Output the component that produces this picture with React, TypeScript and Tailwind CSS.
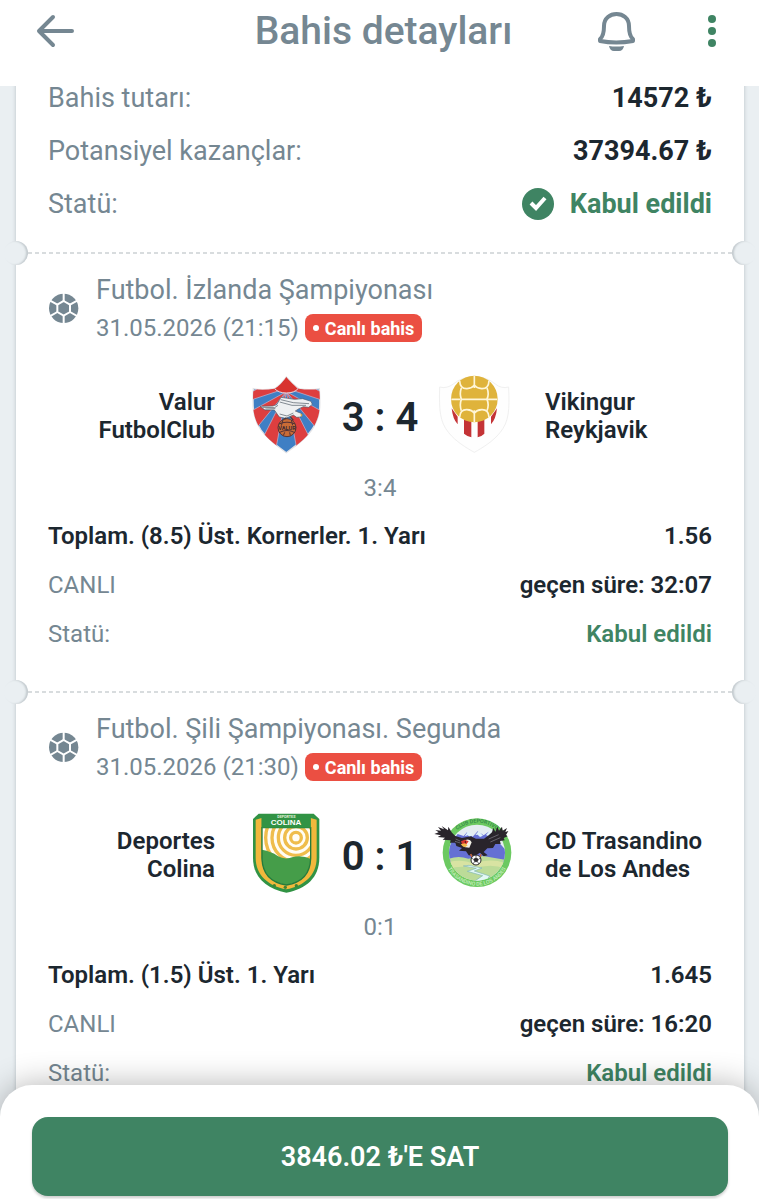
import React from "react";

function BallIcon() {
  return (
    <svg viewBox="0 0 96 96" className="size-8 shrink-0" aria-hidden="true">
      <circle cx="47" cy="46" r="44" fill="#758792" />
      <g stroke="#fff" strokeWidth="6" fill="none">
        <path d="M47 24 66 35V57L47 68 28 57V35Z" />
        <path d="M47 0V24M47 68V96M66 35 89 22M66 57 89 70M28 35 5 22M28 57 5 70" />
      </g>
    </svg>
  );
}

function ValurCrest() {
  const shield = "M139 36C154 54 166 64 176 71 196 74 218 75 238 71 241 122 243 155 215 195 196 223 168 242 139 263 111 242 82 223 63 195 36 155 38 122 40 71 60 76 83 74 104 71 116 64 126 54 139 36Z";
  return (
    <svg viewBox="18 33 240 240" className="size-20 overflow-visible" role="img" aria-label="Valur FutbolClub">
      <defs>
        <clipPath id="valur"><path d={shield} /></clipPath>
      </defs>
      <path d={shield} fill="#3f7fc4" stroke="#e3e3e6" strokeWidth="4" />
      <g clipPath="url(#valur)">
        <g fill="#dd3e3f" stroke="#c9b9d2" strokeWidth="2">
          <path d="M139 70 62 66 30 84V106Z" />
          <path d="M139 80 34 138 54 184Z" />
          <path d="M139 80 72 212 108 250Z" />
          <path d="M139 70 216 66 248 84V106Z" />
          <path d="M139 80 244 138 224 184Z" />
          <path d="M139 80 206 212 170 250Z" />
        </g>
        <path d="M139 32 174 71Q163 84 139 84 116 84 104 71Z" fill="#d8332f" stroke="#e8dce6" strokeWidth="3" />
      </g>
      <path d="M60 124 98 123 110 119 123 97 164 103 188 101 213 109 217 118 206 127 190 125 177 131 166 138 186 146 183 156 170 157 160 150 137 160 118 156 103 135 75 135Z" fill="#eef0f2" stroke="#4b5a6b" strokeWidth="2" />
      <g stroke="#4b5660" strokeWidth="2" fill="none">
        <path d="M67 127 104 128 114 121M76 132 106 131M119 147 141 153 160 144M122 104 160 113 207 116M119 111 156 121 198 121" />
        <path d="M139 158 128 166M151 155 160 166M136 161 143 172" stroke="#443a39" strokeWidth="4" />
      </g>
      <path d="M181 146 188 149 184 156Z" fill="#e1a438" />
      <circle cx="141" cy="188" r="27" fill="#c96c36" stroke="#573535" strokeWidth="3" />
      <path d="M117 177Q141 166 165 177M117 203Q141 190 165 203M129 165 124 182M154 165 158 181M130 212 134 202M151 212 149 202" fill="none" stroke="#513036" strokeWidth="3" />
      <text x="141" y="195" textAnchor="middle" className="font-['Roboto'] text-[17px] font-bold" fill="#3b2934">VALUR</text>
    </svg>
  );
}

function VikingurCrest() {
  return (
    <svg viewBox="12 33 240 240" className="size-20 overflow-visible" role="img" aria-label="Vikingur Reykjavik">
      <path d="M29 66Q50 72 70 57 95 35 133 36 171 35 196 57 214 72 236 66C239 135 237 170 210 203 188 230 158 248 133 262 108 248 78 230 56 203 29 170 27 135 29 66Z" fill="#fefefe" stroke="#f0f0f0" strokeWidth="3" />
      <g fill="#c43336">
        <path d="M65 130 83 155V178Q68 162 65 130ZM102 163 124 169V217Q113 215 102 206ZM143 169 163 163V206Q154 215 143 217ZM183 155 201 130Q198 162 183 178Z" />
      </g>
      <circle cx="133" cy="102" r="70" fill="#dfb33b" />
      <g fill="none" stroke="#fff6d8" strokeWidth="5">
        <path d="M133 32V69M133 136V172M94 103H171M64 103 91 103M171 103H202" />
        <path d="M89 47Q90 72 111 71 126 70 133 61 140 70 155 71 176 72 177 47M89 157Q90 133 111 134 126 135 133 144 140 135 155 134 176 133 177 157" />
        <path d="M94 69Q88 86 94 103 88 119 94 137M171 69Q178 86 171 103 178 119 171 137" />
      </g>
    </svg>
  );
}

function ColinaCrest() {
  return (
    <svg viewBox="3 30 240 240" className="size-20 overflow-visible" role="img" aria-label="Deportes Colina">
      <defs>
        <clipPath id="colina"><path d="M51 68H197V160Q195 230 124 240 53 230 51 160Z" /></clipPath>
      </defs>
      <path d="M41 26H206L223 42V158C223 218 183 252 124 263 65 252 24 218 24 158V42Z" fill="#319344" />
      <path d="M32 44 50 39V158C50 202 78 230 124 238 170 230 197 202 197 158V39L215 44V158C215 211 177 243 124 253 71 243 32 211 32 158Z" fill="#f1b83c" />
      <g clipPath="url(#colina)">
        <path d="M48 66H200V245H48Z" fill="#fffdf5" />
        <g fill="none" stroke="#efbd4c" strokeWidth="10">
          <circle cx="153" cy="98" r="16" />
          <circle cx="153" cy="98" r="34" />
          <circle cx="153" cy="98" r="53" />
          <circle cx="153" cy="98" r="72" />
          <circle cx="153" cy="98" r="91" />
        </g>
        <path d="M48 134Q78 139 98 153 120 166 144 156 173 150 200 163V245H48Z" fill="#459d49" />
      </g>
      <path d="M51 68H197V160Q195 230 124 240 53 230 51 160Z" fill="none" stroke="#257b3c" strokeWidth="4" />
      <path d="M50 38H197V68H50Z" fill="#319344" />
      <g fill="#418334">
        <circle cx="88" cy="242" r="5" />
        <circle cx="121" cy="247" r="5" />
        <circle cx="154" cy="242" r="5" />
      </g>
      <text x="124" y="39" textAnchor="middle" className="font-['Roboto'] text-[11px] font-bold" fill="#e3f2dc">DEPORTES</text>
      <text x="123" y="60" textAnchor="middle" className="font-['Liberation_Sans'] text-[24px] font-bold" fill="#fff">COLINA</text>
    </svg>
  );
}

function TrasandinoCrest() {
  return (
    <svg viewBox="27 30 240 240" className="size-20 overflow-visible" role="img" aria-label="CD Trasandino de Los Andes">
      <defs>
        <clipPath id="andes"><circle cx="156" cy="143" r="84" /></clipPath>
        <path id="andes-top" d="M66 143A90 90 0 0 1 246 143" />
        <path id="andes-bottom" d="M57 143A99 99 0 0 0 255 143" />
      </defs>
      <circle cx="156" cy="143" r="103" fill="#6cc961" />
      <circle cx="156" cy="143" r="84" fill="#e4edf2" />
      <g clipPath="url(#andes)">
        <path d="M68 145 78 113 98 87 116 93 126 82 143 95 158 79 176 91 191 80 209 98 240 133V172H68Z" fill="#6570d4" />
        <path d="M119 94 129 79 142 91 135 96 128 91ZM151 90 161 78 174 92 165 96 158 89ZM183 90 193 78 206 96 194 95Z" fill="#dff2f9" />
        <path d="M68 163Q98 150 130 161L174 153 240 164V234H68Z" fill="#bcdb98" />
        <path d="M68 172Q111 160 145 177 194 158 240 174V190Q199 174 145 190 104 179 68 193Z" fill="#d8e3a2" />
        <path d="M115 183 154 190 127 199 173 212 148 229H183L194 213 148 198 171 189 132 181Z" fill="#e3f8f5" stroke="#7fb6b3" strokeWidth="2" />
      </g>
      <text className="font-['Roboto'] text-[16px] font-medium" fill="#2f8547">
        <textPath href="#andes-top" startOffset="50%" textAnchor="middle">CLUB DEPORTIVO</textPath>
      </text>
      <text className="font-['Roboto'] text-[16px] font-medium" fill="#c5efbe">
        <textPath href="#andes-bottom" startOffset="50%" textAnchor="middle">TRASANDINO DE LOS ANDES</textPath>
      </text>
      <path d="M28 87 41 82 31 75 48 77 39 66 57 73 50 63 69 76 70 65 81 83 91 93 111 99 137 94 153 101 177 101 191 91 201 82 205 68 211 80 217 65 222 77 231 65 233 77 246 69 241 81 250 78 243 90 248 94 236 99 239 106 225 108 227 117 211 117 204 129 187 130 176 141 188 151 176 154 165 143 149 153 131 151 123 139 102 137 111 129 94 123 91 113 75 113 77 106 53 104 60 98 38 96 48 91Z" fill="#29242b" />
      <path d="M92 102 105 108M90 109 106 114M191 102 221 89M196 111 226 98" stroke="#85818c" strokeWidth="2" />
      <path d="M121 105Q135 100 140 112L133 128 121 127 112 122 121 117Z" fill="#f3f0e6" />
      <path d="M108 109 119 104 131 109 123 119 111 117Z" fill="#d9372f" />
      <path d="M107 118 119 115 128 121 120 127 113 124Z" fill="#f0b947" />
      <circle cx="121" cy="111" r="2" fill="#111" />
      <path d="M137 147 142 158M168 148 164 160" stroke="#c0653d" strokeWidth="5" />
      <circle cx="153" cy="165" r="15" fill="#fff" stroke="#29282c" strokeWidth="3" />
      <path d="M153 158 160 163 157 170H149L146 163ZM153 156V150M161 162 168 159M158 171 162 177M148 171 144 177M145 162 138 159" fill="#29282c" stroke="#29282c" strokeWidth="2" />
    </svg>
  );
}

function Perforation() {
  return (
    <div className="relative h-[2px]">
      <div className="mx-3 h-[2px] bg-[repeating-linear-gradient(90deg,#d8dcde_0_4px,transparent_4px_7px)]" />
      <span className="absolute -top-[11px] -left-3 size-6 rounded-full bg-[#eaeff2] shadow-[inset_-2px_0_2px_#c4cbcf]" />
      <span className="absolute -top-[11px] -right-3 size-6 rounded-full bg-[#eaeff2] shadow-[inset_2px_0_2px_#c4cbcf]" />
    </div>
  );
}

type Bet = {
  league: string;
  date: string;
  home: [string, string];
  away: [string, string];
  homeCrest: React.ReactNode;
  awayCrest: React.ReactNode;
  score: [number, number];
  market: string;
  odds: string;
  elapsed: string;
};

const bets: Bet[] = [
  {
    league: "Futbol. İzlanda Şampiyonası",
    date: "31.05.2026 (21:15)",
    home: ["Valur", "FutbolClub"],
    away: ["Vikingur", "Reykjavik"],
    homeCrest: <ValurCrest />,
    awayCrest: <VikingurCrest />,
    score: [3, 4],
    market: "Toplam. (8.5) Üst. Kornerler. 1. Yarı",
    odds: "1.56",
    elapsed: "32:07",
  },
  {
    league: "Futbol. Şili Şampiyonası. Segunda",
    date: "31.05.2026 (21:30)",
    home: ["Deportes", "Colina"],
    away: ["CD Trasandino", "de Los Andes"],
    homeCrest: <ColinaCrest />,
    awayCrest: <TrasandinoCrest />,
    score: [0, 1],
    market: "Toplam. (1.5) Üst. 1. Yarı",
    odds: "1.645",
    elapsed: "16:20",
  },
];

function BetSection({ bet }: { bet: Bet }) {
  return (
    <section>
      <Perforation />
      <div className="px-8 pt-[17px] pb-8">
        <div className="flex items-center gap-4 text-[#758792]">
          <BallIcon />
          <div>
            <h2 className="text-[27px] leading-[38px]">{bet.league}</h2>
            <div className="flex items-center gap-[6px]">
              <time className="text-[24px] leading-[38px]">{bet.date}</time>
              <span className="flex h-7 items-center gap-[6px] rounded-lg bg-[#eb4f42] px-2 text-[18px] font-bold text-white">
                <i className="size-[6px] rounded-full bg-white" />
                Canlı bahis
              </span>
            </div>
          </div>
        </div>
        <div className="mt-[29px] grid grid-cols-[1fr_80px_108px_80px_1fr] items-center text-[24px] leading-7 font-semibold text-[#1c272f]">
          <p className="pr-[31px] text-right">{bet.home[0]}<br />{bet.home[1]}</p>
          {bet.homeCrest}
          <p className="pt-1 text-center text-[40px] leading-[48px]">{bet.score[0]} : {bet.score[1]}</p>
          {bet.awayCrest}
          <p className="pl-[31px]">{bet.away[0]}<br />{bet.away[1]}</p>
        </div>
        <p className="mt-4 mb-2 text-center text-[24px] leading-8 text-[#758792]">{bet.score[0]}:{bet.score[1]}</p>
        <div className="text-[24px] leading-[49px] text-[#758792]">
          <div className="flex justify-between font-semibold text-[#1c272f]"><span>{bet.market}</span><span>{bet.odds}</span></div>
          <div className="flex justify-between"><span>CANLI</span><span className="font-semibold text-[#1c272f]">geçen süre: {bet.elapsed}</span></div>
          <div className="flex justify-between"><span>Statü:</span><span className="font-semibold text-[#3f8463]">Kabul edildi</span></div>
        </div>
      </div>
    </section>
  );
}

export default function App() {
  return (
    <div className="flex h-screen flex-col bg-[#eaeff2] font-['Roboto',sans-serif]">
      <header className="relative z-10 flex h-[86px] shrink-0 items-start justify-between bg-white pt-2 pr-[31px] pl-8">
        <button aria-label="Geri" className="flex h-12 w-12 items-center justify-center text-[#758792]">
          <svg viewBox="0 0 48 48" className="size-12" fill="none" stroke="currentColor" strokeWidth="4" strokeLinecap="round" strokeLinejoin="round"><path d="M21 9 7 23 21 37M8 23H40" /></svg>
        </button>
        <h1 className="pointer-events-none absolute inset-x-0 top-0 pt-[6px] pl-2 text-center text-[39px] leading-[50px] font-medium text-[#758792]">Bahis detayları</h1>
        <div className="flex items-center gap-[55px]">
          <button aria-label="Bildirimler" className="h-12 w-12">
            <svg viewBox="0 0 48 48" className="size-12" fill="none" stroke="#758792" strokeWidth="4" strokeLinejoin="round">
              <path d="M7 31Q11 28 11 18C11 2 36 2 36 18Q36 28 40 31V33Q23 36 7 33Z" />
              <path d="M16 38Q23 39 31 38 30 43 26 43H21Q17 43 16 38Z" fill="#758792" stroke="none" />
            </svg>
          </button>
          <button aria-label="Menü" className="flex h-12 w-8 items-center justify-center">
            <svg viewBox="0 0 32 48" className="h-12 w-8" fill="#3f8463"><circle cx="16" cy="11" r="4" /><circle cx="16" cy="23" r="4" /><circle cx="16" cy="35" r="4" /></svg>
          </button>
        </div>
      </header>
      <main className="-mt-4 min-h-0 flex-1 overflow-y-auto pr-[15px] pl-4 [scrollbar-width:none]">
        <article className="bg-white shadow-[0_0_4px_#b9c1c6]">
          <dl className="flex flex-col gap-[21px] px-8 pt-3 pb-8 text-[27px] leading-8">
            <div className="flex justify-between"><dt className="text-[#758792]">Bahis tutarı:</dt><dd className="font-bold text-[#1c272f]">14572 ₺</dd></div>
            <div className="flex justify-between"><dt className="text-[#758792]">Potansiyel kazançlar:</dt><dd className="font-bold text-[#1c272f]">37394.67 ₺</dd></div>
            <div className="flex justify-between"><dt className="text-[#758792]">Statü:</dt><dd className="flex items-center gap-4 font-bold text-[#3f8463]">
              <svg viewBox="0 0 32 32" className="size-8" aria-hidden="true"><circle cx="16" cy="16" r="16" fill="#3f8463" /><path d="m9 15 5 5 9-10" fill="none" stroke="#fff" strokeWidth="4" /></svg>
              Kabul edildi</dd></div>
          </dl>
          {bets.map((bet) => <BetSection key={bet.league} bet={bet} />)}
        </article>
      </main>
      <footer className="relative z-10 -mt-8 shrink-0 rounded-t-[32px] bg-white pt-8 pr-[31px] pb-[3px] pl-8 shadow-[0_0_32px_#0000004d]">
        <button className="h-[79px] w-full rounded-2xl bg-[#3f8463] pt-[2px] text-[27px] font-semibold text-white shadow-[0_2px_3px_#0003]">3846.02 ₺'E SAT</button>
      </footer>
    </div>
  );
}
